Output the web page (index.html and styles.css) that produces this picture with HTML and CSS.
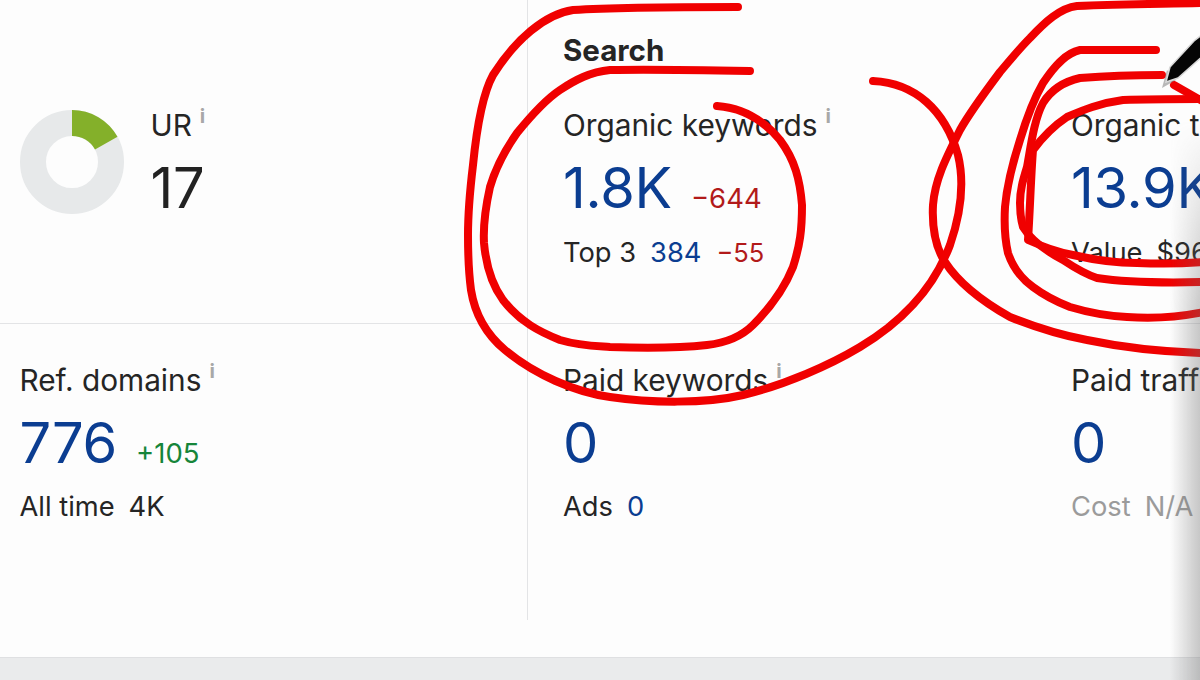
FILE: index.html
```html
<!DOCTYPE html>
<html lang="en">
<head>
  <meta charset="UTF-8">
  <meta name="viewport" content="width=device-width, initial-scale=1.0">
  <title>Site overview</title>
  <link rel="stylesheet" href="styles.css">
</head>
<body>
  <div class="screen">
    <div class="metrics">
      <div class="cell cell-ur">
        <svg class="donut" width="104" height="104" viewBox="0 0 104 104">
          <circle cx="52" cy="52" r="39" fill="none" stroke="#e7e9ea" stroke-width="26"/>
          <path d="M52 0 A52 52 0 0 1 97.5 26.8 L75 39.5 A26 26 0 0 0 52 26 Z" fill="#84b02a"/>
        </svg>
        <div>
          <div class="label">UR<span class="info">i</span></div>
          <div class="big dark">17</div>
        </div>
      </div>

      <div class="cell cell-search">
        <h2 class="section">Search</h2>
        <div class="label">Organic keywords<span class="info">i</span></div>
        <div class="value-row"><span class="big">1.8K</span><span class="delta down">−644</span></div>
        <div class="sub">Top 3<span class="num">384</span><span class="num down">−55</span></div>
      </div>

      <div class="cell cell-search">
        <div class="section"></div>
        <div class="label">Organic traffic<span class="info">i</span></div>
        <div class="value-row"><span class="big">13.9K</span></div>
        <div class="sub">Value<span class="num plain">$96K</span></div>
      </div>

      <div class="cell cell-low">
        <div class="label">Ref. domains<span class="info">i</span></div>
        <div class="value-row"><span class="big">776</span><span class="delta up">+105</span></div>
        <div class="sub">All time<span class="num plain">4K</span></div>
      </div>

      <div class="cell cell-low">
        <div class="label">Paid keywords<span class="info">i</span></div>
        <div class="value-row"><span class="big">0</span></div>
        <div class="sub">Ads<span class="num">0</span></div>
      </div>

      <div class="cell cell-low">
        <div class="label">Paid traffic<span class="info">i</span></div>
        <div class="value-row"><span class="big">0</span></div>
        <div class="sub muted">Cost<span class="num plain">N/A</span></div>
      </div>
    </div>
    <div class="footer-band"></div>
  </div>

  <!-- marker drawn over the screenshot -->
  <svg class="marker" width="1200" height="680" viewBox="0 0 1200 680">
    <g fill="none" stroke="#f00000" stroke-width="8" stroke-linecap="round" stroke-linejoin="round">
      <path d="M738 7 C680 7 620 7 573 10 C545 14 515 40 493 75 C482 95 476 135 473 165 C470 190 468 215 468 235 C468 260 469 275 471 290 C475 315 487 335 505 350 C535 375 575 392 610 397 C650 403 705 404 743 395 C785 385 830 365 860 347 C905 320 935 285 950 245 C962 210 964 180 958 155 C945 110 915 83 873 81"/>
      <path d="M750 71 C700 70 650 69 610 70 C590 72 575 80 560 90 C545 100 530 117 517 133 C505 150 495 170 490 187 C486 205 483 225 484 243 C486 265 492 285 503 300 C520 322 540 332 560 340 C580 346 595 346 610 347 C640 348 680 348 707 345 C725 343 742 336 753 325 C772 306 785 287 793 267 C800 245 802 230 802 205 C800 180 795 160 780 140 C765 122 745 108 717 106"/>
      <path d="M1204 3 C1160 4 1120 4 1077 6 C1060 8 1045 22 1030 38 C1020 48 1010 60 1000 72 C985 92 970 112 960 130 C945 160 935 180 933 205 C932 225 934 245 945 262 C960 285 985 303 1010 317 C1035 327 1060 335 1087 340 C1125 348 1165 352 1204 353"/>
      <path d="M1156 50 C1130 50 1105 50 1080 50 C1065 53 1053 68 1043 83 C1032 102 1026 120 1020 140 C1012 165 1007 185 1005 207 C1004 225 1005 240 1008 253 C1013 268 1022 279 1033 287 C1045 296 1057 302 1070 307 C1090 313 1108 316 1127 317 C1155 319 1180 317 1204 312"/>
      <path d="M1162 75 C1130 75 1105 76 1080 78 C1062 82 1051 90 1043 103 C1034 120 1031 145 1027 167 C1023 180 1020 190 1020 203 C1020 212 1021 220 1023 227 C1032 242 1048 252 1063 260 C1075 268 1085 274 1097 278 C1130 283 1165 283 1204 282"/>
      <path d="M1204 99 C1175 99 1150 99 1123 100 C1100 103 1083 110 1067 117 C1052 127 1042 138 1033 150 C1031 175 1030 210 1028 240 C1045 248 1058 252 1073 255 C1095 260 1115 263 1137 263 C1160 264 1180 264 1204 262"/>
      <path d="M1174 85 L1204 102"/>
    </g>
    <path class="pen-shadow" d="M1162 88 L1167 70 L1176 80 Z"/>
    <path class="pen" d="M1166 82 L1170 67 L1194 41 L1204 33 L1204 55 L1178 78 Z"/>
  </svg>
  <div class="edge-shadow"></div>
</body>
</html>
```

FILE: styles.css
```css
* {
  box-sizing: border-box;
}
body {
  margin: 0;
  font-family: Inter, "Liberation Sans", sans-serif;
  background-color: #fdfdfd;
  color: #222;
  overflow: hidden;
}
.screen {
  width: 1200px;
  height: 680px;
  display: flex;
  flex-direction: column;
  overflow: hidden;
}
.metrics {
  display: grid;
  grid-template-columns: 527px 509px 509px;
  grid-template-rows: 324px 296px;
  height: 620px;
}
.cell {
  border-left: 1px solid #e3e4e6;
  padding-left: 35px;
}
.cell:nth-child(3n+1) {
  border-left: none;
  padding-left: 19.5px;
}
.cell:nth-child(3) {
  border-left: none;
}
.cell:nth-child(6) {
  border-left: none;
}
.cell-search, .cell-ur {
  border-bottom: 1px solid #e3e4e6;
}
.cell-ur {
  display: flex;
  align-items: flex-start;
  gap: 27px;
  padding-top: 107px;
}
.donut {
  flex: none;
  margin-top: 3px;
}
.cell-ur .big {
  margin-top: 12px;
}
.section {
  margin: 0;
  height: 32px;
  margin-top: 34px;
  margin-bottom: 41px;
  font-size: 29.5px;
  line-height: 32px;
  font-weight: 700;
  color: #252525;
}
.label {
  font-size: 29.8px;
  line-height: 32px;
  color: #252525;
  white-space: nowrap;
}
.info {
  display: inline-block;
  margin-left: 8px;
  font-size: 20px;
  line-height: 18px;
  font-weight: 700;
  color: #a8a8a8;
  vertical-align: 13px;
}
.value-row {
  display: flex;
  align-items: baseline;
  gap: 19px;
  margin-top: 12px;
}
.big {
  font-size: 56px;
  line-height: 70px;
  letter-spacing: -0.25px;
  color: #0b3d91;
}
.dark {
  color: #222;
}
.delta {
  font-size: 27.5px;
}
.down {
  color: #b21a1a;
}
.up {
  color: #16853a;
}
.sub {
  margin-top: 14px;
  font-size: 27.3px;
  line-height: 32px;
  color: #252525;
  white-space: nowrap;
}
.cell-low .sub {
  margin-top: 13px;
}
.num {
  margin-left: 14px;
  color: #0b3d91;
}
.num.down {
  margin-left: 15px;
  font-size: 25.5px;
  color: #b21a1a;
}
.num.plain {
  color: inherit;
}
.muted {
  color: #9b9b9b;
}
.cell-low {
  padding-top: 38px;
}
.footer-band {
  margin-top: 37px;
  height: 23px;
  background-color: #eaebec;
  border-top: 1px solid #dfe0e2;
}
.marker {
  position: absolute;
  left: 0;
  top: 0;
}
.pen {
  fill: #050505;
  stroke: #d8d8d8;
  stroke-width: 1.5;
}
.pen-shadow {
  fill: #8a8a8a;
  opacity: 0.6;
}
.edge-shadow {
  position: absolute;
  top: 120px;
  right: 0;
  width: 30px;
  height: 560px;
  background: linear-gradient(to right, rgba(110, 110, 110, 0), rgba(110, 110, 110, 0.38));
  -webkit-mask-image: linear-gradient(to bottom, transparent, #000 200px);
  mask-image: linear-gradient(to bottom, transparent, #000 200px);
}
```
